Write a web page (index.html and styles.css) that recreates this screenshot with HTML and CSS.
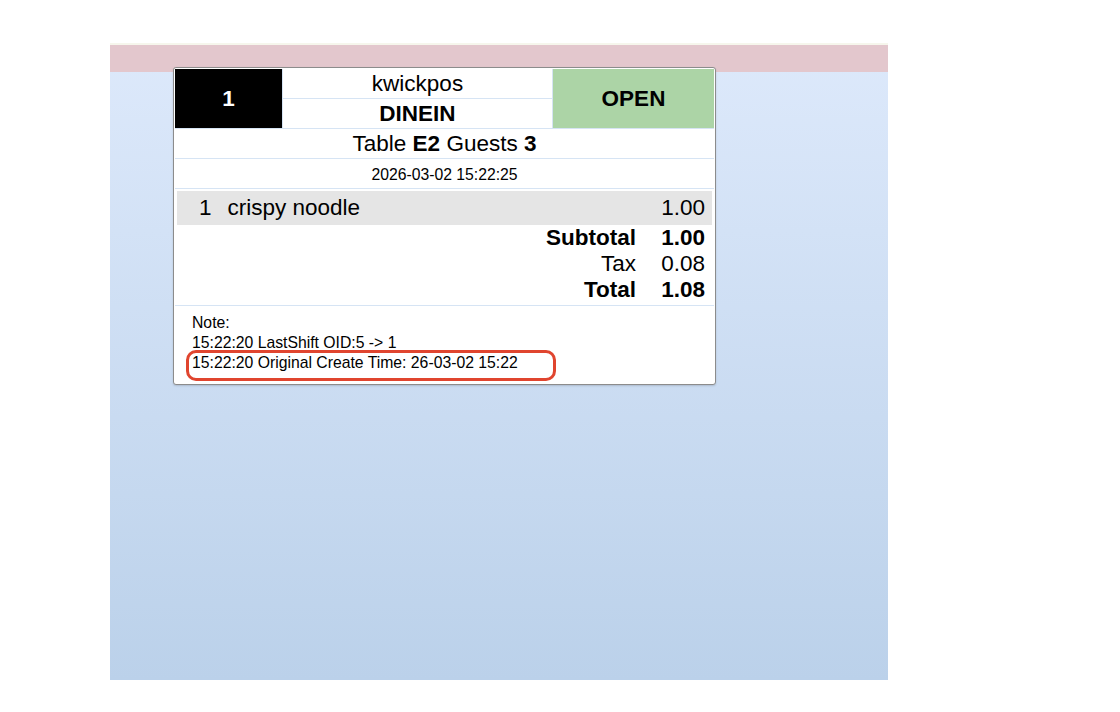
FILE: index.html
```html
<!DOCTYPE html>
<html lang="en">
<head>
    <meta charset="UTF-8">
    <title>Order 1</title>
    <link rel="stylesheet" href="styles.css">
</head>
<body>

<div class="screen">
    <div class="ticket">
        <div class="ticket-head">
            <div class="order-no">1</div>
            <div class="store">kwickpos</div>
            <div class="status">OPEN</div>
            <div class="order-type">DINEIN</div>
            <div class="table-info">Table <b>E2</b> Guests <b>3</b></div>
            <div class="order-date">2026-03-02 15:22:25</div>
        </div>

        <div class="items">
            <div class="item-row">
                <span class="qty">1</span>
                <span class="name">crispy noodle</span>
                <span class="price">1.00</span>
            </div>
            <div class="sum-row bold">
                <span class="sum-label">Subtotal</span>
                <span class="sum-value">1.00</span>
            </div>
            <div class="sum-row">
                <span class="sum-label">Tax</span>
                <span class="sum-value">0.08</span>
            </div>
            <div class="sum-row bold">
                <span class="sum-label">Total</span>
                <span class="sum-value">1.08</span>
            </div>
        </div>

        <div class="notes">
            <div>Note:</div>
            <div>15:22:20 LastShift OID:5 -&gt; 1</div>
            <div class="note-mark">15:22:20 Original Create Time: 26-03-02 15:22<span class="highlight"></span></div>
        </div>
    </div>
</div>

</body>
</html>
```

FILE: styles.css
```css
body {
    margin: 0;
    background: #fff;
    font-family: "Liberation Sans", Arial, Helvetica, sans-serif;
    color: #000;
}

.screen {
    margin: 45px 0 0 110px;
    width: 778px;
    height: 635px;
    box-sizing: border-box;
    padding: 22px 0 0 63px;
    background:
        linear-gradient(#e3c7cd 0, #e3c7cd 27px, transparent 27px),
        linear-gradient(#dde9fb, #bbd1ea);
    box-shadow: 0 -2px 0 #f6f6ec;
}

.ticket {
    width: 543px;
    box-sizing: border-box;
    background: #fff;
    border: 1px solid #8c8c8c;
    border-radius: 3px;
    padding: 1px;
    box-shadow: 0 1px 2px rgba(0, 0, 0, 0.15);
}

.ticket-head {
    display: grid;
    grid-template-columns: 107px 269px 161px;
    grid-template-rows: repeat(4, 29px);
    gap: 1px;
    background: #d6e4f4;
    border-bottom: 1px solid #d6e4f4;
}

.ticket-head > div {
    background: #fff;
    text-align: center;
    font-size: 22.5px;
    line-height: 29px;
}

.ticket-head .order-no {
    grid-column: 1;
    grid-row: 1 / 3;
    background: #000;
    color: #fff;
    font-weight: bold;
    line-height: 59px;
}

.ticket-head .store {
    grid-column: 2;
    grid-row: 1;
}

.ticket-head .order-type {
    grid-column: 2;
    grid-row: 2;
    font-weight: bold;
}

.ticket-head .status {
    grid-column: 3;
    grid-row: 1 / 3;
    background: #acd4a6;
    font-weight: bold;
    line-height: 59px;
}

.ticket-head .table-info {
    grid-column: 1 / 4;
    grid-row: 3;
}

.ticket-head .order-date {
    grid-column: 1 / 4;
    grid-row: 4;
    font-size: 15.75px;
    line-height: 32px;
}

.items {
    padding: 2px;
    border-bottom: 1px solid #d6e4f4;
    font-size: 22.5px;
}

.item-row {
    display: flex;
    align-items: center;
    height: 34px;
    background: #e5e5e5;
    padding: 0 7px 0 22px;
}

.item-row .name {
    margin-left: 16px;
    flex: 1;
}

.sum-row {
    display: flex;
    justify-content: flex-end;
    line-height: 26px;
    padding-right: 7px;
}

.sum-row.bold {
    font-weight: bold;
}

.sum-value {
    width: 44px;
    margin-left: 25px;
    text-align: right;
}

.notes {
    padding: 7px 17px 10px;
    font-size: 15.75px;
    line-height: 20px;
}

.note-mark {
    position: relative;
}

.highlight {
    position: absolute;
    left: -6px;
    top: -3px;
    width: 370px;
    height: 31px;
    box-sizing: border-box;
    border: 3px solid #e0452f;
    border-radius: 10px;
}
```
